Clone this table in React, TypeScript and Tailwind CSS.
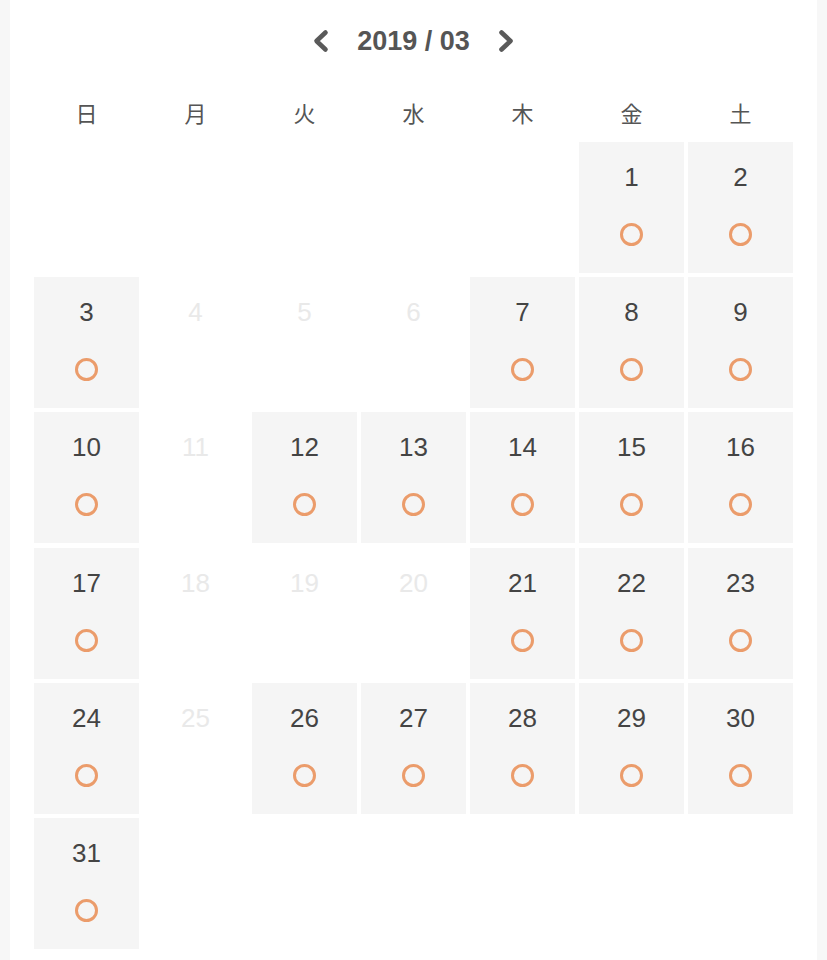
import React from "react";

// 2019年3月 — 1日は金曜
const weekdays = ["日", "月", "火", "水", "木", "金", "土"];
const closed = [4, 5, 6, 11, 18, 19, 20, 25];
const firstOffset = 5;

function DayCell({ day }: { day: number }) {
  const isClosed = closed.includes(day);
  return (
    <div
      className={
        "flex h-[131px] flex-col items-center pt-[20px] " +
        (isClosed ? "bg-white" : "bg-[#f5f5f5]")
      }
    >
      <span
        className={
          "text-[26px] leading-[30px] " +
          (isClosed ? "text-[#e9e9e9]" : "text-[#444444]")
        }
      >
        {day}
      </span>
      {!isClosed && (
        <span className="mt-[31px] block h-[23px] w-[23px] rounded-full border-[3px] border-[#eb9c6b]" />
      )}
    </div>
  );
}

export default function App() {
  const days = Array.from({ length: 31 }, (_, i) => i + 1);
  const blanks = Array.from({ length: firstOffset }, (_, i) => i);

  return (
    <div
      className="flex min-h-[960px] w-full bg-[#f7f7f7] px-[10px]"
      style={{ fontFamily: '"Liberation Sans", "Noto Sans CJK JP", sans-serif' }}
    >
      <div className="flex-1 bg-white px-[24px] pb-[11px]">
        {/* --- month header --- */}
        <div className="flex h-[82px] items-center justify-center gap-[28px] text-[#555555]">
          <button className="flex items-center">
            <svg width="16" height="24" viewBox="0 0 16 24" fill="none">
              <path d="M12.5 3.5 L3.5 12 L12.5 20.5" stroke="#5a5a5a" strokeWidth="4.6" strokeLinecap="round" strokeLinejoin="round" />
            </svg>
          </button>
          <span className="text-[27px] font-bold leading-none">2019 / 03</span>
          <button className="flex items-center">
            <svg width="16" height="24" viewBox="0 0 16 24" fill="none">
              <path d="M3.5 3.5 L12.5 12 L3.5 20.5" stroke="#5a5a5a" strokeWidth="4.6" strokeLinecap="round" strokeLinejoin="round" />
            </svg>
          </button>
        </div>

        {/* --- weekday labels --- */}
        <div className="grid h-[60px] grid-cols-7 gap-x-[4px] pt-[5px]">
          {weekdays.map((w) => (
            <div key={w} className="flex items-center justify-center text-[22px] text-[#555555]">
              {w}
            </div>
          ))}
        </div>

        {/* --- days --- */}
        <div className="grid grid-cols-7 gap-x-[4px] gap-y-[4.2px]">
          {blanks.map((b) => (
            <div key={"b" + b} className="h-[131px]" />
          ))}
          {days.map((d) => (
            <DayCell key={d} day={d} />
          ))}
        </div>
      </div>
    </div>
  );
}
